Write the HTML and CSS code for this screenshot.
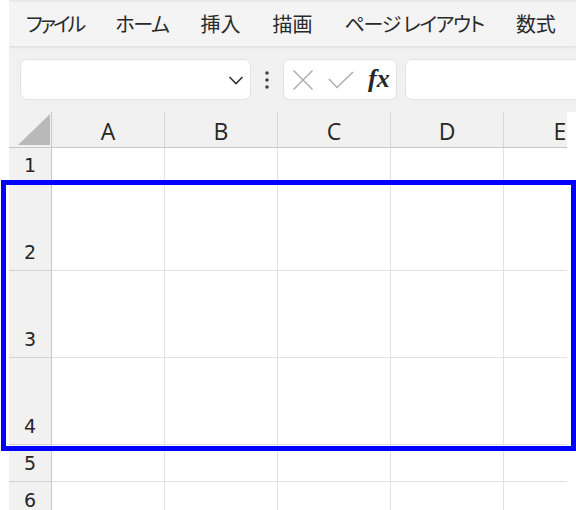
FILE: index.html
```html
<!DOCTYPE html>
<html lang="ja">
<head>
<meta charset="utf-8">
<title>Excel</title>
<link rel="stylesheet" href="styles.css">
</head>
<body>
<div class="app">
  <nav class="menubar">
    <span class="tab kana-tight">ファイル</span>
    <span class="tab kana">ホーム</span>
    <span class="tab">挿入</span>
    <span class="tab">描画</span>
    <span class="tab kana">ページ レイアウト</span>
    <span class="tab">数式</span>
  </nav>
  <div class="toolbar">
    <div class="namebox">
      <svg class="chev" width="16" height="10" viewBox="0 0 16 10"><polyline points="1.5,2 8,8.5 14.5,2" fill="none" stroke="#333" stroke-width="1.6"/></svg>
    </div>
    <div class="dots">
      <svg width="6" height="20" viewBox="0 0 6 20"><circle cx="3" cy="3" r="1.8" fill="#424242"/><circle cx="3" cy="10" r="1.8" fill="#424242"/><circle cx="3" cy="17" r="1.8" fill="#424242"/></svg>
    </div>
    <div class="fxbox">
      <svg width="22" height="22" viewBox="0 0 22 22"><path d="M1.5 1.5 L20.5 20.5 M20.5 1.5 L1.5 20.5" stroke="#ababab" stroke-width="1.4" fill="none"/></svg>
      <svg width="26" height="18" viewBox="0 0 26 18"><polyline points="1,8 9,16.5 25,1" stroke="#ababab" stroke-width="1.4" fill="none"/></svg>
      <span class="fx">fx</span>
    </div>
    <div class="formula"></div>
  </div>
  <div class="sheet">
    <div class="corner"><svg width="32" height="31" viewBox="0 0 32 31"><polygon points="0,31 32,0 32,31" fill="#b9b9b9"/></svg></div>
    <div class="colhead">A</div>
    <div class="colhead">B</div>
    <div class="colhead">C</div>
    <div class="colhead">D</div>
    <div class="colhead">E</div>

    <div class="rowhead">1</div>
    <div class="cell"></div><div class="cell"></div><div class="cell"></div><div class="cell"></div><div class="cell"></div>
    <div class="rowhead tall">2</div>
    <div class="cell"></div><div class="cell"></div><div class="cell"></div><div class="cell"></div><div class="cell"></div>
    <div class="rowhead tall">3</div>
    <div class="cell"></div><div class="cell"></div><div class="cell"></div><div class="cell"></div><div class="cell"></div>
    <div class="rowhead tall">4</div>
    <div class="cell"></div><div class="cell"></div><div class="cell"></div><div class="cell"></div><div class="cell"></div>
    <div class="rowhead">5</div>
    <div class="cell"></div><div class="cell"></div><div class="cell"></div><div class="cell"></div><div class="cell"></div>
    <div class="rowhead">6</div>
    <div class="cell"></div><div class="cell"></div><div class="cell"></div><div class="cell"></div><div class="cell"></div>
  </div>
</div>
<div class="highlight"></div>
</body>
</html>
```
FILE: styles.css
```css
html, body {
  margin: 0;
  padding: 0;
  background: #ffffff;
  overflow: hidden;
  height: 510px;
}
body {
  position: relative;
  font-family: "Noto Sans CJK JP", "Noto Sans", sans-serif;
  color: #242424;
}
.app {
  margin-left: 9px;
  width: 567px;
  overflow: hidden;
}
.menubar {
  height: 44px;
  border-top: 2px solid #e6ebe8;
  background: #f4f4f4;
  display: flex;
  align-items: center;
  gap: 32px;
  padding-left: 17px;
  box-shadow: 0 1px 3px rgba(0,0,0,0.10);
  position: relative;
  z-index: 1;
  white-space: nowrap;
}
.tab {
  font-size: 20px;
  font-feature-settings: "palt";
  line-height: 1;
  color: #2a2a2a;
}
.kana {
  letter-spacing: -1.3px;
}
.kana-tight {
  letter-spacing: -3px;
}
.toolbar {
  height: 66px;
  background: #f1f1f1;
  display: flex;
  align-items: flex-start;
  padding-top: 13px;
  padding-left: 11px;
  box-sizing: border-box;
}
.namebox {
  width: 231px;
  height: 41px;
  background: #fff;
  border: 1px solid #e3e3e3;
  border-radius: 7px;
  box-sizing: border-box;
  display: flex;
  align-items: center;
  justify-content: flex-end;
  padding-right: 6px;
}
.dots {
  width: 32px;
  height: 41px;
  display: flex;
  align-items: center;
  justify-content: center;
}
.fxbox {
  width: 114px;
  height: 41px;
  background: #fff;
  border: 1px solid #e3e3e3;
  border-radius: 7px;
  box-sizing: border-box;
  display: flex;
  align-items: center;
  padding-left: 8px;
  gap: 14px;
}
.fx {
  font-family: "Liberation Serif", serif;
  font-style: italic;
  font-weight: bold;
  font-size: 26px;
  line-height: 1;
  color: #262626;
  margin-top: -2px;
}
.formula {
  flex: 1;
  height: 41px;
  margin-left: 8px;
  margin-right: -20px;
  background: #fff;
  border: 1px solid #e3e3e3;
  border-radius: 7px;
  box-sizing: border-box;
}
.sheet {
  width: 558px;
  overflow: hidden;
  display: grid;
  grid-template-columns: 43px 113px 113px 113px 113px 113px;
  grid-template-rows: 36px 36px 87px 87px 87px 37px 37px;
  background: #fff;
}
.corner {
  background: #f1f1f1;
  border-right: 1px solid #c8c8c8;
  border-bottom: 1px solid #c8c8c8;
  box-sizing: border-box;
  display: flex;
  align-items: flex-end;
  justify-content: flex-end;
  padding: 0 1px 2px 0;
}
.colhead {
  background: #f1f1f1;
  border-right: 1px solid #d9d9d9;
  border-bottom: 1px solid #c8c8c8;
  box-sizing: border-box;
  display: flex;
  align-items: center;
  justify-content: center;
  font-family: "Open Sans", "Liberation Sans", sans-serif;
  font-size: 23px;
  color: #262626;
  padding-top: 2px;
}
.rowhead {
  background: #f1f1f1;
  border-right: 1px solid #c8c8c8;
  border-bottom: 1px solid #d2d2d2;
  box-sizing: border-box;
  display: flex;
  align-items: flex-end;
  justify-content: center;
  font-family: "DejaVu Sans", sans-serif;
  font-size: 19px;
  line-height: 1;
  padding-bottom: 8px;
  color: #262626;
}
.cell {
  border-right: 1px solid #e1e1e1;
  border-bottom: 1px solid #e1e1e1;
  box-sizing: border-box;
}
.highlight {
  position: absolute;
  left: 1px;
  top: 180px;
  width: 575px;
  height: 271px;
  border: 5px solid #0000ff;
  box-sizing: border-box;
  pointer-events: none;
}
```
